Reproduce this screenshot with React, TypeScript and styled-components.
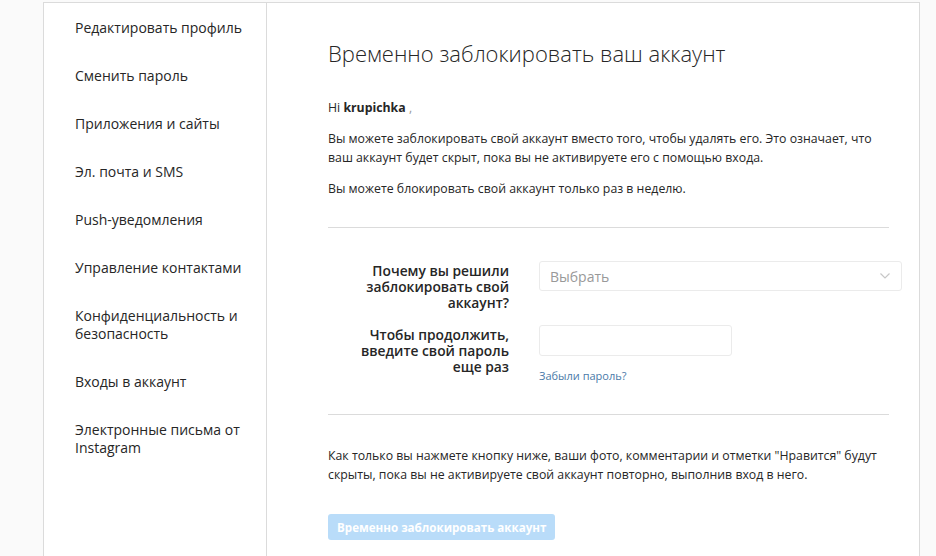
import React from "react"
import styled, { createGlobalStyle } from "styled-components"

const Global = createGlobalStyle`
    html, body {
        margin: 0;
        padding: 0;
        background: #fafafa;
        font-family: "Open Sans", "Noto Sans", sans-serif;
        color: #262626;
    }
`

const Page = styled.div`
    width: 936px;
    height: 556px;
    overflow: hidden;
    padding: 2px 0 0 43px;
    box-sizing: border-box;
`

const Card = styled.div`
    display: flex;
    width: 877px;
    height: 600px;
    background: #fff;
    border: 1px solid #dbdbdb;
    box-sizing: border-box;
`

const Sidebar = styled.ul`
    width: 222px;
    flex-shrink: 0;
    margin: 0;
    padding: 16px 0 0;
    list-style: none;
    border-right: 1px solid #dbdbdb;
`

const NavItem = styled.li`
    padding: 0 6px 0 31px;
    margin-bottom: 30px;
    font-size: 14px;
    line-height: 18px;
    color: #262626;
    white-space: pre-line;
`

const Main = styled.main`
    flex: 1;
    padding: 35px 31px 0 61px;
`

const Title = styled.h1`
    margin: 0 0 30px;
    font-size: 22px;
    font-weight: 300;
    line-height: 30px;
    color: #262626;
`

const Text = styled.p<{ $gap?: number }>`
    max-width: 550px;
    margin: 0 0 ${(p) => p.$gap ?? 12}px;
    font-size: 12.3px;
    line-height: 19px;
    color: #262626;
`

const Comma = styled.span`
    color: #999;
`

const Divider = styled.hr`
    margin: 0;
    border: 0;
    border-top: 1px solid #dbdbdb;
    width: 561px;
`

const Form = styled.div`
    display: grid;
    grid-template-columns: 181px 363px;
    column-gap: 30px;
    row-gap: 14px;
    padding: 33px 0 31px;
`

const Label = styled.label`
    font-size: 13.8px;
    font-weight: 600;
    line-height: 16px;
    text-align: right;
    padding: 2px 0 0 26px;
    color: #262626;
`

const Select = styled.div`
    display: flex;
    align-items: center;
    justify-content: space-between;
    height: 30px;
    padding: 0 10px;
    border: 1px solid #ebebeb;
    border-radius: 3px;
    box-sizing: border-box;
    font-size: 14px;
    color: #999;
`

const Field = styled.div`
    display: flex;
    flex-direction: column;
    gap: 12px;
`

const Input = styled.input`
    width: 193px;
    height: 31px;
    border: 1px solid #ebebeb;
    border-radius: 3px;
    box-sizing: border-box;
    outline: none;
    background: #fff;
`

const Link = styled.a`
    font-size: 11px;
    color: #4a7aa8;
    text-decoration: none;
`

const Notice = styled.p`
    max-width: 560px;
    margin: 31px 0 30px;
    font-size: 12.3px;
    line-height: 19px;
    color: #262626;
`

const Button = styled.button`
    height: 26px;
    padding: 0 9px;
    border: 0;
    border-radius: 3px;
    background: #b9dcf9;
    color: #fff;
    font-family: inherit;
    font-size: 11.6px;
    font-weight: 700;
`

const nav = [
    "Редактировать профиль",
    "Сменить пароль",
    "Приложения и сайты",
    "Эл. почта и SMS",
    "Push-уведомления",
    "Управление контактами",
    "Конфиденциальность и\nбезопасность",
    "Входы в аккаунт",
    "Электронные письма от\nInstagram",
]

const Chevron = () => (
    <svg width="12" height="8" viewBox="0 0 12 8">
        <polyline points="1.5,1.5 6,6 10.5,1.5" fill="none" stroke="#c7c7c7" strokeWidth="1.2" />
    </svg>
)

const App: React.FC = () => {
    return (
        <Page>
            <Global />
            <Card>
                <Sidebar>
                    {nav.map((item) => (
                        <NavItem key={item}>{item}</NavItem>
                    ))}
                </Sidebar>
                <Main>
                    <Title>Временно заблокировать ваш аккаунт</Title>
                    <Text $gap={12}>
                        Hi <b>krupichka</b> <Comma>,</Comma>
                    </Text>
                    <Text>
                        Вы можете заблокировать свой аккаунт вместо того, чтобы удалять его. Это означает, что
                        ваш аккаунт будет скрыт, пока вы не активируете его с помощью входа.
                    </Text>
                    <Text $gap={29}>Вы можете блокировать свой аккаунт только раз в неделю.</Text>
                    <Divider />
                    <Form>
                        <Label>Почему вы решили заблокировать свой аккаунт?</Label>
                        <Select>
                            Выбрать
                            <Chevron />
                        </Select>
                        <Label>Чтобы продолжить, введите свой пароль еще раз</Label>
                        <Field>
                            <Input type="password" />
                            <Link href="#">Забыли пароль?</Link>
                        </Field>
                    </Form>
                    <Divider />
                    <Notice>
                        Как только вы нажмете кнопку ниже, ваши фото, комментарии и отметки "Нравится" будут
                        скрыты, пока вы не активируете свой аккаунт повторно, выполнив вход в него.
                    </Notice>
                    <Button disabled>Временно заблокировать аккаунт</Button>
                </Main>
            </Card>
        </Page>
    )
}

export default App
